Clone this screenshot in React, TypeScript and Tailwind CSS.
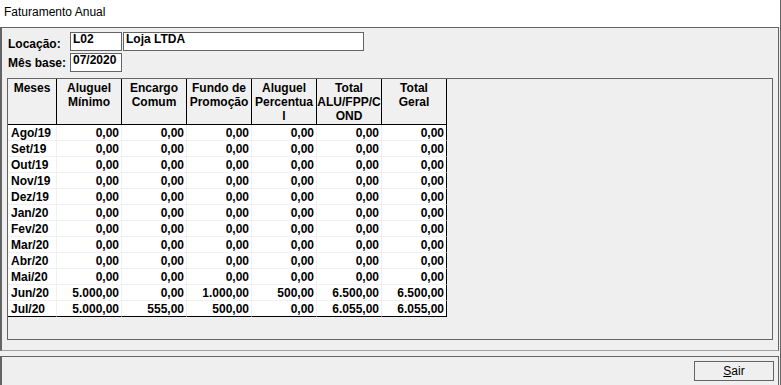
import React from "react";

const rows: string[][] = [
  ["Ago/19", "0,00", "0,00", "0,00", "0,00", "0,00", "0,00"],
  ["Set/19", "0,00", "0,00", "0,00", "0,00", "0,00", "0,00"],
  ["Out/19", "0,00", "0,00", "0,00", "0,00", "0,00", "0,00"],
  ["Nov/19", "0,00", "0,00", "0,00", "0,00", "0,00", "0,00"],
  ["Dez/19", "0,00", "0,00", "0,00", "0,00", "0,00", "0,00"],
  ["Jan/20", "0,00", "0,00", "0,00", "0,00", "0,00", "0,00"],
  ["Fev/20", "0,00", "0,00", "0,00", "0,00", "0,00", "0,00"],
  ["Mar/20", "0,00", "0,00", "0,00", "0,00", "0,00", "0,00"],
  ["Abr/20", "0,00", "0,00", "0,00", "0,00", "0,00", "0,00"],
  ["Mai/20", "0,00", "0,00", "0,00", "0,00", "0,00", "0,00"],
  ["Jun/20", "5.000,00", "0,00", "1.000,00", "500,00", "6.500,00", "6.500,00"],
  ["Jul/20", "5.000,00", "555,00", "500,00", "0,00", "6.055,00", "6.055,00"],
];

const headers: string[][] = [
  ["Meses"],
  ["Aluguel", "Mínimo"],
  ["Encargo", "Comum"],
  ["Fundo de", "Promoção"],
  ["Aluguel", "Percentua", "l"],
  ["Total", "ALU/FPP/C", "OND"],
  ["Total", "Geral"],
];

export default function App() {
  return (
    <div className="w-[781px] h-[385px] overflow-hidden bg-[#f0f0f0] border-r border-[#646464] font-['Liberation_Sans',Arial,sans-serif] text-black flex flex-col">
      {/* Title bar */}
      <div className="h-[27px] bg-white pl-[4px] pt-[5px] text-[12px] leading-[14px] shrink-0">
        Faturamento Anual
      </div>

      {/* Top panel */}
      <div className="w-[779px] h-[324px] shrink-0 bg-[#efefef] border-t border-l-2 border-r border-b border-t-[#646464] border-l-[#646464] border-r-[#646464] border-b-[#a0a0a0] pl-[5px] pt-[4px] flex flex-col">
        {/* Form rows */}
        <div className="flex flex-col gap-[2px] pl-[1px]">
          <div className="flex h-[19px]">
            <div className="w-[62px] pt-[5px] text-[12px] leading-[14px] font-bold">Locação:</div>
            <div className="flex gap-[1px]">
              <div className="w-[52px] h-[19px] bg-white border border-[#646464] pl-[2px] text-[12px] leading-[12px] font-bold">
                L02
              </div>
              <div className="w-[241px] h-[19px] bg-white border border-[#646464] pl-[2px] text-[12px] leading-[12px] font-bold">
                Loja LTDA
              </div>
            </div>
          </div>
          <div className="flex h-[19px]">
            <div className="w-[62px] pt-[3px] text-[12px] leading-[14px] font-bold">Mês base:</div>
            <div className="w-[52px] h-[19px] bg-white border border-[#646464] pl-[2px] text-[12px] leading-[12px] font-bold">
              07/2020
            </div>
          </div>
        </div>

        {/* Grid box */}
        <div className="mt-[6px] w-[766px] h-[262px] border border-[#646464] bg-[#efefef] flex flex-col items-start">
          {/* Header */}
          <div className="flex h-[46px]">
            {headers.map((h, i) => (
              <div
                key={i}
                className={
                  (i === 0 ? "w-[49px] " : "w-[65px] ") +
                  "h-[46px] bg-[#f0f0f0] border-r border-b border-black pt-[2px] text-center text-[12px] leading-[14px] font-bold whitespace-nowrap"
                }
              >
                {h.map((line, j) => (
                  <div key={j}>{line}</div>
                ))}
              </div>
            ))}
          </div>
          {/* Data rows */}
          {rows.map((r, ri) => (
            <div key={ri} className="flex h-[16px]">
              {r.map((c, ci) => {
                const last = ri === rows.length - 1;
                const lastCol = ci === r.length - 1;
                return (
                  <div
                    key={ci}
                    className={
                      (ci === 0 ? "w-[49px] pl-[3px] text-left " : "w-[65px] pr-[2px] text-right ") +
                      (lastCol ? "border-r-black " : "border-r-[#f0f0f0] ") +
                      (last ? "border-b-black " : "border-b-[#f0f0f0] ") +
                      "h-[16px] bg-white border-r border-b pt-[1px] text-[12px] leading-[14px] font-bold whitespace-nowrap"
                    }
                  >
                    {c}
                  </div>
                );
              })}
            </div>
          ))}
        </div>
      </div>

      {/* Gap between panels */}
      <div className="h-[5px] shrink-0" />

      {/* Bottom panel */}
      <div className="w-[779px] flex-1 bg-[#efefef] border-t border-l-2 border-r border-[#646464] flex justify-end items-start pt-[4px] pr-[4px]">
        <button className="w-[80px] h-[20px] bg-[#efefef] border border-[#646464] flex items-center justify-center text-[12px] leading-[14px] font-['Liberation_Sans',Arial,sans-serif]">
          <span>
            <span className="underline">S</span>air
          </span>
        </button>
      </div>
    </div>
  );
}
